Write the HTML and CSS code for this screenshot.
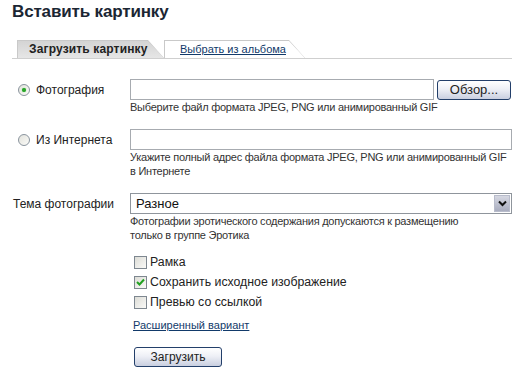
FILE: index.html
```html
<!DOCTYPE html>
<html lang="ru">
<head>
  <meta charset="UTF-8" />
  <title>Вставить картинку</title>
  <link rel="stylesheet" href="styles.css">
</head>
<body>

  <h1 class="title">Вставить картинку</h1>

  <div class="tabs">
    <div class="tab tab-active"><span class="tab-inner">Загрузить картинку</span></div>
    <div class="tab tab-album"><span class="tab-inner"><a href="#">Выбрать из альбома</a></span></div>
  </div>

  <form class="upload">
    <div class="row">
      <label class="row-label"><span class="radio radio-on"></span>Фотография</label>
      <div class="field">
        <div class="file-line">
          <input class="text-input file-path" type="text">
          <button type="button" class="btn btn-browse">Обзор...</button>
        </div>
        <div class="hint">Выберите файл формата JPEG, PNG или анимированный GIF</div>
      </div>
    </div>

    <div class="row">
      <label class="row-label"><span class="radio"></span>Из Интернета</label>
      <div class="field">
        <input class="text-input" type="text">
        <div class="hint">Укажите полный адрес файла формата JPEG, PNG или анимированный GIF<br>в Интернете</div>
      </div>
    </div>

    <div class="row">
      <label class="row-label row-label-plain">Тема фотографии</label>
      <div class="field">
        <div class="select-box">
          <select class="select">
            <option selected>Разное</option>
            <option>Эротика</option>
          </select>
          <span class="select-arrow">
            <svg width="9" height="7" viewBox="0 0 9 7"><path d="M1 1.5 L4.5 5 L8 1.5" fill="none" stroke="#111" stroke-width="2"/></svg>
          </span>
        </div>
        <div class="hint">Фотографии эротического содержания допускаются к размещению<br>только в группе Эротика</div>
      </div>
    </div>

    <div class="options">
      <label class="check-line"><span class="check"></span>Рамка</label>
      <label class="check-line"><span class="check check-on">
        <svg width="9" height="8" viewBox="0 0 9 8"><path d="M1 4 L3.5 6.5 L8 1.5" fill="none" stroke="#21a121" stroke-width="2"/></svg>
      </span>Сохранить исходное изображение</label>
      <label class="check-line"><span class="check"></span>Превью со ссылкой</label>

      <a class="more-link" href="#">Расширенный вариант</a>

      <button type="submit" class="btn btn-submit">Загрузить</button>
    </div>
  </form>

</body>
</html>
```

FILE: styles.css
```css
* {
  box-sizing: border-box;
}

body {
  margin: 0;
  padding: 0 11px 0 12px;
  background: #fff;
  color: #222;
  font-family: 'Liberation Sans', Arial, sans-serif;
  font-size: 12px;
}

.title {
  margin: 0;
  padding-top: 1px;
  font-size: 17px;
  letter-spacing: -0.15px;
  line-height: 21px;
  font-weight: bold;
  color: #1b2633;
}

.tabs {
  display: flex;
  margin-top: 18px;
  padding-left: 5px;
  border-bottom: 1px solid #cfcfcf;
}

.tab {
  height: 18px;
  padding: 1px 0 0 1px;
  background: #c9c9c9;
  clip-path: polygon(0 0, calc(100% - 16px) 0, 100% 100%, 0 100%);
}

.tab-active {
  width: 147px;
}

.tab-album {
  width: 141px;
}

.tab-inner {
  display: block;
  height: 17px;
  padding-left: 15px;
  line-height: 17px;
  background: #fff;
  clip-path: polygon(0 0, calc(100% - 16px) 0, 100% 100%, 0 100%);
}

.tab-active .tab-inner {
  padding-left: 11px;
  font-weight: bold;
  font-size: 12px;
  letter-spacing: 0.15px;
  color: #222;
  background: linear-gradient(#d4d4d4, #e6e6e6);
}

.tab a {
  color: #123a6a;
  font-size: 11px;
}

.upload {
  margin-top: 20px;
}

.row {
  display: grid;
  grid-template-columns: 118px 1fr;
  margin-bottom: 15px;
}

.row-label {
  display: flex;
  align-items: center;
  height: 21px;
  padding-left: 6px;
  font-size: 12px;
}

.row-label-plain {
  padding-left: 1px;
}

.radio {
  width: 12px;
  height: 12px;
  margin-right: 6px;
  border: 1px solid #8a949e;
  border-radius: 50%;
  background: linear-gradient(135deg, #e2e2dc, #fbfbf8);
  display: flex;
  align-items: center;
  justify-content: center;
}

.radio-on::after {
  content: "";
  width: 4px;
  height: 4px;
  border-radius: 50%;
  background: #29a329;
  box-shadow: 0 0 1px #5c5;
}

.file-line {
  display: flex;
  gap: 3px;
  align-items: center;
}

.text-input {
  display: block;
  width: 100%;
  height: 21px;
  margin: 0;
  border: 1px solid #a7abb0;
  background: #fff;
}

.file-path {
  width: 304px;
}

.hint {
  font-size: 11px;
  letter-spacing: -0.25px;
  line-height: 14px;
  white-space: nowrap;
  color: #333;
}

.btn {
  margin: 0;
  padding: 0;
  border: 1px solid #233f6a;
  border-radius: 3px;
  background: linear-gradient(#ffffff 0%, #eef0f6 45%, #c9cfe0 100%);
  color: #222;
  font-family: 'Liberation Sans', Arial, sans-serif;
}

.btn-browse {
  width: 74px;
  height: 20px;
  font-size: 13px;
}

.select-box {
  position: relative;
  height: 21px;
}

.select {
  display: block;
  width: 100%;
  height: 21px;
  margin: 0;
  padding: 0 0 0 5px;
  border: 1px solid #8f959c;
  background: #fff;
  appearance: none;
  color: #111;
  font-family: 'Liberation Sans', Arial, sans-serif;
  font-size: 13px;
}

.select-arrow {
  position: absolute;
  top: 2px;
  right: 2px;
  width: 16px;
  height: 17px;
  display: flex;
  align-items: center;
  justify-content: center;
  background: linear-gradient(#d6d8e2, #a9adbf);
  border: 1px solid #b8bccb;
}

.options {
  display: flex;
  flex-direction: column;
  align-items: flex-start;
  padding-left: 122px;
  margin-top: -5px;
}

.check-line {
  display: flex;
  align-items: center;
  height: 20px;
  font-size: 12.3px;
  color: #222;
}

.check {
  width: 13px;
  height: 13px;
  margin-right: 3px;
  border: 1px solid #7e8790;
  background: linear-gradient(135deg, #dcdcd6, #fafaf8);
  display: flex;
  align-items: center;
  justify-content: center;
}

.more-link {
  margin-top: 6px;
  margin-left: -1px;
  font-size: 11px;
  line-height: 14px;
  color: #123a6a;
}

.btn-submit {
  width: 88px;
  height: 20px;
  margin-top: 15px;
  font-size: 12px;
}
```
